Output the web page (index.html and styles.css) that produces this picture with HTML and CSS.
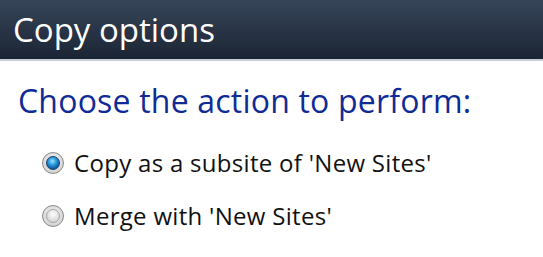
FILE: index.html
```html
<!DOCTYPE html>
<html>
<head>
<meta charset="utf-8">
<link rel="stylesheet" href="styles.css">
</head>
<body>
<div class="header"><span class="title">Copy options</span></div>
<div class="content">
  <h1 class="prompt">Choose the action to perform:</h1>
  <div class="options">
    <label class="option"><span class="radio checked"><span class="dot"></span></span><span class="label">Copy as a subsite of 'New Sites'</span></label>
    <label class="option"><span class="radio"><span class="dot"></span></span><span class="label">Merge with 'New Sites'</span></label>
  </div>
</div>
</body>
</html>
```
FILE: styles.css
```css
html, body { margin: 0; padding: 0; background: #fff; }
body { font-family: "Open Sans", "Noto Sans", sans-serif; width: 543px; height: 257px; overflow: hidden; }
.header {
  height: 59px;
  background: linear-gradient(#364659, #1b2434);
  border-bottom: 2px solid #c9ced4;
  padding-left: 13px;
  line-height: 59px;
}
.title { color: #fff; font-size: 33px; }
.content { padding-left: 18px; }
.prompt {
  margin: 0;
  padding-top: 20px;
  font-weight: normal;
  color: #0f2c96;
  font-size: 32px;
  letter-spacing: 0.2px;
  line-height: 40px;
}
.options { display: flex; flex-direction: column; gap: 13px; padding-top: 22px; padding-left: 24px; }
.option { display: flex; align-items: center; gap: 10px; height: 40px; }
.label { font-size: 24px; color: #111; letter-spacing: 0.3px; line-height: 40px; }
.radio {
  width: 22px; height: 22px; border-radius: 50%;
  box-sizing: border-box;
  background: radial-gradient(circle at 50% 40%, #f4f4f4, #c9c9c9);
  border: 1px solid #8a8a8a;
  display: flex; align-items: center; justify-content: center;
}
.dot {
  width: 14px; height: 14px; border-radius: 50%; box-sizing: border-box;
  border: 1px solid #a6a6a6;
  background: radial-gradient(circle at 50% 35%, #ffffff, #d8d8d8 70%, #c4c4c4);
}
.checked .dot {
  border-color: #1d3f64;
  background: radial-gradient(circle at 45% 35%, #9fe3ff 0, #2ea0e0 35%, #0a5ea8 70%, #083b70 100%);
}
```
